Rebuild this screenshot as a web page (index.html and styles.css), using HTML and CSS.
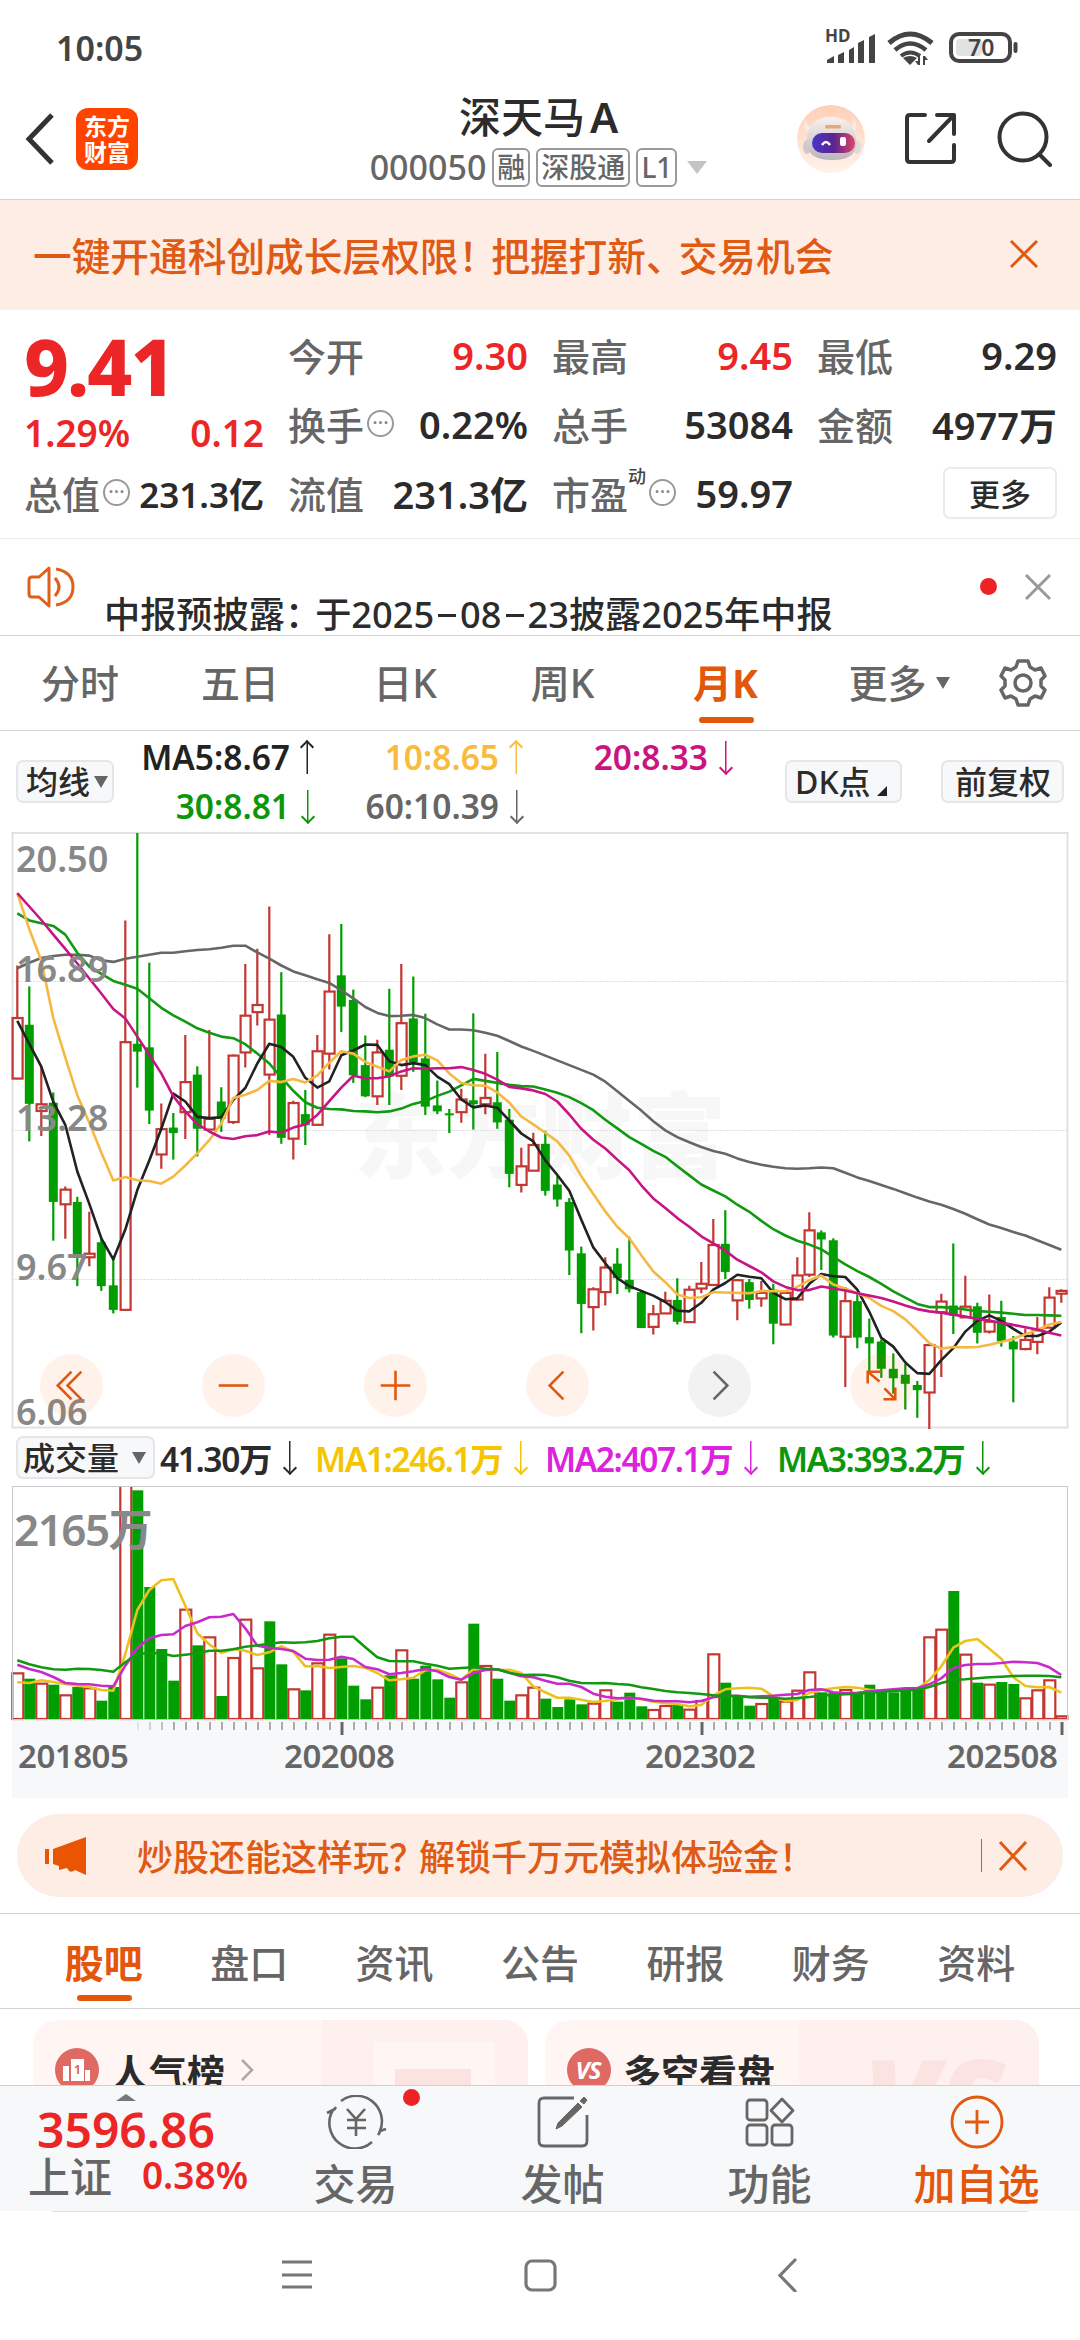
FILE: index.html
```html
<!DOCTYPE html>
<html lang="zh-CN">
<head>
  <meta charset="UTF-8" />
  <meta name="viewport" content="width=device-width, initial-scale=1.0" />
  <title>深天马A 000050</title>
  <link rel="stylesheet" href="styles.css">
</head>
<body>
  <!-- Status bar -->
  <div class="status-bar">
    <span class="clock">10:05</span>
    <svg class="status-icons" width="194" height="40" viewBox="0 0 194 40" fill="none" stroke="#444">
      <text x="0" y="14" class="hd">HD</text>
      <g fill="#444" stroke="none">
        <path d="M2 35v-3l7-4v7z M13 35v-8l6-3v11z M24 35v-13l5-3v16z M33 35v-20l6-3v23z M44 35v-26l6-3v29z" />
        <path d="M78 30q7-4 14 0l-7 7z" />
        <path d="M95 28v9h-2l-3-4h3v-5z M98 37v-9h2l3 4h-3v5z" />
      </g>
      <path d="M64 15q21-18 43 0" stroke-width="5" />
      <path d="M70 22q15-13 31 0" stroke-width="4.5" />
      <path d="M76 28q9-7 19 0" stroke-width="4" />
      <rect x="126" y="6" width="59" height="27" rx="8" stroke-width="4" />
      <rect x="131" y="11" width="26" height="17" rx="4" fill="#e2e2e2" stroke="none" />
      <path d="M190.500 16v7" stroke-width="4" stroke-linecap="round" />
      <text x="143" y="28" class="battery">70</text>
    </svg>
  </div>

  <!-- Header -->
  <div class="header">
    <div class="header-left">
      <svg width="32" height="54" viewBox="0 0 32 54" fill="none" stroke="#333" stroke-width="5"><path d="M28 3L5 27l23 24" /></svg>
      <div class="logo"><span>东方</span><span>财富</span></div>
    </div>
    <div class="header-title">
      <h1>深天马<span>A</span></h1>
      <div class="code-line">
        <span class="code">000050</span>
        <span class="tag">融</span>
        <span class="tag">深股通</span>
        <span class="tag">L1</span>
        <i class="tri tri-light"></i>
      </div>
    </div>
    <div class="header-right">
      <svg width="68" height="68" viewBox="0 0 68 68">
        <defs>
          <linearGradient id="peach" x1="0" y1="0" x2="0" y2="1"><stop offset="0" stop-color="#ffcfb6" /><stop offset="1" stop-color="#fff3ec" /></linearGradient>
          <linearGradient id="visor"><stop offset="0" stop-color="#4a35c8" /><stop offset=".5" stop-color="#5a2590" /><stop offset="1" stop-color="#e04468" /></linearGradient>
          <linearGradient id="shell" x1="0" y1="0" x2="0" y2="1"><stop offset="0" stop-color="#f7f2f1" /><stop offset="1" stop-color="#bcb4ba" /></linearGradient>
        </defs>
        <circle cx="34" cy="34" r="34" fill="url(#peach)" />
        <path d="M15 22Q7 20 9 13Q5 21 9 27zM52 22Q58 20 56 12Q62 21 57 27z" fill="#f6ebe6" />
        <ellipse cx="10" cy="42" rx="4" ry="7" fill="#cfc8cb" />
        <ellipse cx="60" cy="42" rx="4" ry="7" fill="#e2dada" />
        <path d="M10 34Q12 12 34 12T59 34Q62 55 35 55T10 34z" fill="url(#shell)" />
        <rect x="28" y="20" width="16" height="3.500" rx="1.500" fill="#e8a878" />
        <rect x="15" y="28" width="43" height="20" rx="10" fill="url(#visor)" />
        <path d="M25 40q4-6 8 0" fill="none" stroke="#fff" stroke-width="2.500" />
        <rect x="43" y="32" width="6" height="9" rx="2" fill="#fff" />
      </svg>
      <svg width="54" height="54" viewBox="0 0 54 54" fill="none" stroke="#333" stroke-width="4" stroke-linecap="round" stroke-linejoin="round">
        <path d="M21 3H6Q3 3 3 6V47Q3 50 6 50H47Q50 50 50 47V33M33 3H50V22M50 3L25 29" />
      </svg>
      <svg width="56" height="56" viewBox="0 0 56 56" fill="none" stroke="#333" stroke-width="4" stroke-linecap="round">
        <circle cx="26" cy="26" r="23.500" /><path d="M43 44L53 54" />
      </svg>
    </div>
  </div>

  <div class="banner">
    <span>一键开通科创成长层权限<span class="punct">！</span>把握打新<span class="punct">、</span>交易机会</span>
    <svg width="30" height="30" viewBox="0 0 30 30" fill="none" stroke="#e25a12" stroke-width="3"><path d="M2 2L28 28M28 2L2 28" /></svg>
  </div>

  <!-- Quote -->
  <div class="quote">
    <div class="col col-price">
      <div class="price">9.41</div>
      <div class="change"><span>1.29%</span><span>0.12</span></div>
      <div class="cell small"><label>总值</label><i class="dots">···</i><b>231.3亿</b></div>
    </div>
    <div class="col">
      <div class="cell"><label>今开</label><b class="red">9.30</b></div>
      <div class="cell"><label>换手</label><i class="dots">···</i><b>0.22%</b></div>
      <div class="cell"><label>流值</label><b>231.3亿</b></div>
    </div>
    <div class="col">
      <div class="cell"><label>最高</label><b class="red">9.45</b></div>
      <div class="cell"><label>总手</label><b>53084</b></div>
      <div class="cell"><label>市盈</label><sup>动</sup><i class="dots">···</i><b>59.97</b></div>
    </div>
    <div class="col">
      <div class="cell"><label>最低</label><b>9.29</b></div>
      <div class="cell"><label>金额</label><b>4977万</b></div>
      <div class="cell"><button class="more-btn">更多</button></div>
    </div>
  </div>

  <div class="notice">
    <svg width="48" height="42" viewBox="0 0 48 42" fill="none" stroke="#e0601a" stroke-width="3">
      <path d="M22 2L12 11H5Q2 11 2 14V28Q2 31 5 31H12L22 40z" stroke-linejoin="round" />
      <path d="M28 12q8 9 0 18M29 3q17 3 17 18T29 39" />
    </svg>
    <p>中报预披露<span class="colon">：</span>于2025<s></s>08<s></s>23披露2025年中报</p>
    <i class="red-dot"></i>
    <svg width="28" height="28" viewBox="0 0 28 28" fill="none" stroke="#999" stroke-width="3"><path d="M2 2L26 26M26 2L2 26" /></svg>
  </div>

  <!-- Period tabs -->
  <div class="period-tabs">
    <span>分时</span><span>五日</span><span>日K</span><span>周K</span><span class="active">月K</span>
    <span class="more">更多<i class="tri"></i></span>
    <svg width="48" height="50" viewBox="-24 -25 48 50" fill="none" stroke="#666" stroke-width="3.500" stroke-linejoin="round">
      <path d="M-5-22H5L7-16L12-13L18-15L22-7L18-3V3L22 7L18 15L12 13L7 16L5 22H-5L-7 16L-12 13L-18 15L-22 7L-18 3V-3L-22-7L-18-15L-12-13L-7-16z" />
      <circle r="8" />
    </svg>
  </div>

  <!-- Moving averages -->
  <div class="ma-bar">
    <button class="chip">均线<i class="tri"></i></button>
    <div class="ma-grid">
      <span class="ma5">MA5:8.67<em class="up"></em></span>
      <span class="ma10">10:8.65<em class="up"></em></span>
      <span class="ma20">20:8.33<em></em></span>
      <span class="ma30">30:8.81<em></em></span>
      <span class="ma60">60:10.39<em></em></span>
    </div>
    <button class="chip chip-dk">DK点<i class="corner"></i></button>
    <button class="chip">前复权</button>
  </div>

  <div class="chart-box">
    <svg id="kline" width="1080" height="597" viewBox="0 0 1080 597"></svg>
    <div class="controls">
      <span><svg viewBox="0 0 64 64"><path d="M32 18L18 32L32 46M42 18L28 32L42 46" /></svg></span>
      <span><svg viewBox="0 0 64 64"><path d="M17 32H47" /></svg></span>
      <span><svg viewBox="0 0 64 64"><path d="M17 32H47M32 17V47" /></svg></span>
      <span><svg viewBox="0 0 64 64"><path d="M38 18L24 32L38 46" /></svg></span>
      <span class="grey"><svg viewBox="0 0 64 64"><path d="M26 18L40 32L26 46" /></svg></span>
      <span><svg viewBox="0 0 64 64"><path d="M18 30V18H31M18 18L30 28M35 35L46 46M34 46H46V34" /></svg></span>
    </div>
  </div>

  <!-- Volume -->
  <div class="vol-bar">
    <button class="chip">成交量<i class="tri"></i></button>
    <span class="v0">41.30万<em></em></span>
    <span class="v1">MA1:246.1万<em></em></span>
    <span class="v2">MA2:407.1万<em></em></span>
    <span class="v3">MA3:393.2万<em></em></span>
  </div>
  <svg id="volume" width="1080" height="312" viewBox="0 0 1080 312"></svg>

  <div class="promo">
    <svg width="42" height="38" viewBox="0 0 42 38" fill="#ea5504"><path d="M0 12H4V27H0zM8 12L41 0V38L30 33Q27 36 24 34L22 31L14 33V29L8 27z" /></svg>
    <span class="promo-text">炒股还能这样玩<span class="punct">？</span>解锁千万元模拟体验金！</span>
    <i class="divider"></i>
    <svg width="30" height="32" viewBox="0 0 30 32" fill="none" stroke="#e25a12" stroke-width="3"><path d="M2 2L28 30M28 2L2 30" /></svg>
  </div>

  <!-- Content tabs -->
  <div class="content-tabs">
    <span class="active">股吧</span><span>盘口</span><span>资讯</span><span>公告</span><span>研报</span><span>财务</span><span>资料</span>
  </div>

  <div class="cards">
    <div class="card">
      <svg class="card-bg" width="495" height="65" viewBox="0 0 495 65"><path d="M289 0H495V65H289z" fill="#fef0ef" /><path d="M340 22H462V65H340z" fill="#fff5f3" /><path d="M362 49H438V65H362z" fill="#fae3e1" /></svg>
      <svg width="44" height="44" viewBox="0 0 44 44"><circle cx="22" cy="22" r="22" fill="#df6a64" /><path d="M8 33V18H14V33zM16 33V11H29V33zM30 33V22H35V33z" fill="#fff" /><text x="19" y="26" class="rank">1</text></svg>
      <h2>人气榜</h2>
      <svg width="16" height="24" viewBox="0 0 16 24" fill="none" stroke="#aaa" stroke-width="2.500"><path d="M3 2L13 12L3 22" /></svg>
    </div>
    <div class="card">
      <svg class="card-bg" width="495" height="65" viewBox="0 0 495 65"><path d="M254 0H495V65H254z" fill="#fef0ef" /><text x="318" y="128" class="vs-ghost">VS</text></svg>
      <svg width="44" height="44" viewBox="0 0 44 44"><circle cx="22" cy="22" r="22" fill="#df6a64" /><text x="21" y="31" class="vs">VS</text></svg>
      <h2>多空看盘</h2>
    </div>
  </div>

  <!-- Bottom bar -->
  <div class="bottom-bar">
    <div class="index-box">
      <i class="tri-up"></i>
      <div class="index-value">3596.86</div>
      <div class="index-line"><span>上证</span><b>0.38%</b></div>
    </div>
    <div class="action">
      <svg width="62" height="54" viewBox="-31 -27 62 54" fill="none" stroke="#666" stroke-width="2.600">
        <path d="M-15-21A25.500 25.500 0 0 1 24 9L30 7M24 10L22 13M16 20A25.500 25.500 0 0 1-23-12L-29-9M-22-12L-20-15" />
        <path d="M-9-13L0-3L9-13M0-3V14M-9-2H10M-9 6H10" />
      </svg>
      <i class="red-dot"></i>
      <span>交易</span>
    </div>
    <div class="action">
      <svg width="54" height="54" viewBox="0 0 54 54" fill="none" stroke="#666" stroke-width="2.800">
        <path d="M38 3H8Q3 3 3 8V46Q3 51 8 51H46Q51 51 51 46V20" />
        <path d="M20 34L22 28L42 8L46 12L26 31zM44 6L48 2L51 5L48 9z" fill="#666" stroke-width="1" />
      </svg>
      <span>发帖</span>
    </div>
    <div class="action">
      <svg width="54" height="54" viewBox="0 0 54 54" fill="none" stroke="#666" stroke-width="2.800">
        <rect x="4" y="5" width="20" height="20" rx="3" /><rect x="4" y="30" width="20" height="20" rx="3" /><rect x="29" y="30" width="20" height="20" rx="3" />
        <path d="M39 4L50 15.500L39 27L28 15.500z" stroke-linejoin="round" />
      </svg>
      <span>功能</span>
    </div>
    <div class="action orange">
      <svg width="54" height="54" viewBox="0 0 54 54" fill="none" stroke="#e25a12" stroke-width="2.800"><circle cx="27" cy="27" r="25" /><path d="M15 27H39M27 15V39" /></svg>
      <span>加自选</span>
    </div>
  </div>

  <div class="nav-bar">
    <svg width="520" height="34" viewBox="0 0 520 34" fill="none" stroke="#777" stroke-width="3.200">
      <path d="M4 4H34M4 17H34M4 29H34" />
      <rect x="248" y="3" width="29" height="29" rx="6" />
      <path d="M517 2L502 17.500L517 33" stroke-linecap="round" />
    </svg>
  </div>

  <script>
    const RED = "#c43632";
    const GREEN = "#009e00";
    const STEP = 12;
    const X0 = 17.3;
    const DATES = ["201805", "202008", "202302", "202508"];

    // type, high, body top, body bottom, low (1505 units over the chart height)
    const candles = `r 367 500 653 655|g 420 517 717 812|r 622 718 735 798|g 688 714 965 1063|r 926 934 971 1058|g 952 965 1098 1178|r 990 1096 1105 1128|g 1055 1067 1178 1190
|g 1105 1176 1238 1247|r 253 561 1238 1241|g 32 565 585 676|g 360 574 734 768|r 716 781 845 881|g 740 777 791 858|r 543 662 738 806|g 622 643 780 850
|r 530 755 782 784|g 675 711 755 788|r 592 595 763 768|r 363 494 587 625|r 325 467 485 519|r 218 504 643 796|g 384 491 803 818|r 709 715 805 858
|g 682 743 771 821|r 543 584 770 772|r 288 433 590 630|g 262 392 471 535|g 428 454 645 664|g 544 619 698 700|r 555 587 698 720|g 426 580 648 720
|r 363 513 646 682|g 395 501 612 636|g 489 602 724 745|g 658 721 736 743|g 730 741 746 791|r 679 706 738 765|g 488 708 718 782|r 590 702 718 743
|g 586 713 764 780|g 730 757 894 928|r 828 875 922 941|r 790 821 886 887|g 785 818 937 949|g 900 921 959 977|g 955 965 1088 1150|g 1078 1095 1223 1297
|r 1181 1186 1231 1290|r 1105 1131 1193 1227|g 1082 1121 1158 1198|g 1053 1162 1186 1194|g 1190 1193 1284 1284|r 1226 1249 1281 1300|r 1192 1215 1247 1248|g 1158 1213 1268 1275
|r 1177 1187 1269 1270|r 1117 1172 1184 1196|r 1008 1074 1175 1176|g 986 1071 1142 1160|r 1160 1163 1214 1264|g 1160 1168 1213 1235|r 1165 1195 1209 1230|g 1172 1187 1273 1325
|r 1192 1195 1275 1277|r 1105 1151 1212 1215|r 991 1037 1149 1155|g 1037 1042 1060 1137|g 1057 1062 1303 1308|r 1180 1216 1306 1433|g 1195 1216 1308 1335|g 1260 1307 1323 1400
|g 1313 1318 1387 1410|g 1348 1387 1411 1450|g 1375 1402 1425 1490|g 1418 1428 1441 1511|r 1325 1327 1447 1540|r 1197 1217 1244 1408|g 1070 1227 1253 1299|r 1152 1230 1257 1258
|g 1220 1229 1296 1323|r 1199 1268 1293 1298|g 1215 1256 1318 1331|g 1304 1318 1338 1472|r 1285 1314 1337 1340|r 1256 1290 1319 1350|r 1181 1207 1283 1284|r 1186 1190 1197 1220`
      .split("|").map(s => s.trim().split(" ")).map(([t, ...v]) => [t, ...v.map(Number)]);

    const ma = {
      "#666666": [374,360,348,343,340,340,342,354,358,350,345,340,335,335,331,328,326,322,317,317,334,350,367,382,392,402,411,430,450,472,487,495,494,492,500,516,529,529,531,537,545,558,572,583,595,607,619,631,643,661,685,710,734,761,784,801,814,826,836,843,855,864,871,876,880,881,880,878,880,891,903,912,922,932,943,954,964,972,983,995,1009,1022,1031,1041,1050,1062,1074,1086],
      "#119911": [235,253,260,267,289,335,370,388,406,416,426,450,474,493,509,526,537,547,551,566,590,615,650,684,713,727,730,731,735,736,738,736,729,717,710,697,686,670,654,659,664,669,672,673,681,689,700,715,733,757,779,801,818,836,851,875,898,921,936,951,972,990,1013,1034,1050,1063,1073,1085,1104,1123,1140,1155,1172,1191,1207,1223,1231,1231,1233,1237,1241,1243,1245,1248,1251,1251,1252,1253],
      "#222222": [507,565,623,712,770,888,970,1057,1110,1035,935,860,780,691,711,750,753,751,707,677,615,565,573,598,651,676,660,594,582,567,568,609,619,614,619,648,667,706,726,721,727,759,792,812,860,897,937,1010,1080,1120,1158,1178,1190,1202,1218,1240,1242,1220,1187,1170,1149,1154,1158,1195,1211,1209,1172,1147,1153,1155,1187,1243,1309,1331,1371,1398,1400,1365,1335,1293,1266,1252,1266,1286,1304,1304,1293,1270],
      "#f5b942": [184,275,355,500,600,695,765,840,911,902,910,912,919,901,873,842,809,767,702,694,682,659,662,654,663,645,613,584,590,611,623,635,606,597,593,607,640,664,670,671,688,714,749,769,790,812,848,900,945,989,1028,1057,1100,1141,1168,1199,1208,1206,1193,1194,1195,1196,1190,1191,1191,1180,1163,1151,1174,1184,1196,1208,1228,1241,1262,1291,1322,1336,1332,1333,1332,1326,1319,1311,1300,1289,1275,1269],
      "#c71585": [184,218,252,289,325,362,400,438,477,501,547,593,640,698,736,768,787,802,806,799,796,787,790,777,769,745,710,676,646,652,652,647,635,627,628,627,627,624,631,641,656,674,678,683,692,711,744,780,808,830,858,885,923,956,980,1006,1028,1052,1070,1088,1111,1127,1143,1166,1180,1188,1188,1179,1184,1189,1196,1202,1208,1217,1227,1236,1242,1245,1250,1255,1261,1265,1271,1276,1282,1288,1296,1303]
    };

    // bar tops, 895 is the floor
    const volume = [755,774,786,792,821,799,800,840,799,150,209,499,685,780,564,674,647,826,709,594,740,602,731,803,809,725,639,713,795,836,798,764,686,774,735,776,831,782,609,733,774,840,821,798,834,859,836,851,846,806,843,816,857,865,853,852,864,838,698,786,827,855,847,834,840,807,752,815,815,805,820,792,815,815,810,808,647,624,511,699,786,789,784,790,830,806,776,884];
    const greenVolume = [12, 21, 60];
    const volumeMa = {
      "#ecc11e": [785,787,779,784,790,795,799,808,810,700,568,508,479,475,555,638,671,697,685,690,703,695,677,693,737,736,742,739,736,741,757,779,776,771,749,747,760,778,746,748,748,747,757,797,815,831,831,837,844,841,836,831,836,843,848,850,857,853,824,806,803,801,804,826,842,838,817,808,803,799,801,807,810,808,806,804,778,737,681,661,655,684,714,770,796,800,799,816],
      "#c82bcb": [732,745,754,769,787,790,791,795,797,735,682,653,643,641,616,605,590,588,580,623,675,681,685,691,714,718,717,708,715,739,746,761,757,752,745,752,769,777,757,748,746,756,767,770,780,789,789,799,819,828,833,831,834,840,842,842,845,841,830,826,825,828,827,825,822,820,808,806,815,818,816,812,809,806,803,803,791,773,742,733,730,730,727,723,725,727,740,763],
      "#119911": [719,731,740,746,747,744,745,748,753,725,700,697,698,706,702,698,690,690,686,678,674,670,665,666,665,661,653,648,648,680,710,721,722,722,729,735,744,742,740,744,746,756,763,762,763,770,780,787,788,787,790,792,800,805,811,815,817,820,824,826,826,830,831,832,834,832,829,825,822,821,819,816,814,811,809,807,799,787,778,776,773,770,768,766,765,765,766,770]
    };

    const x = i => X0 + STEP * i;
    const priceY = v => (v - 32) / 2.529 + 1;
    const volY = v => (v - 199) / 3 + 1;

    function line(values, y, color) {
      const points = values.map((v, i) => `${x(i)},${y(v).toFixed(1)}`).join(" ");
      return `<polyline points="${points}" fill="none" stroke="${color}" stroke-width="2.600" stroke-linejoin="round"/>`;
    }

    function drawKline() {
      let out = `<text class="watermark" x="354" y="339">东方财富</text>`;
      [149.500, 298.500, 447.500].forEach(y => {
        out += `<path d="M12 ${y}H1068" stroke="#dedede" stroke-width="1" stroke-dasharray="2 1"/>`;
      });
      out += `<rect x="12.500" y="1" width="1055" height="594.500" fill="none" stroke="#e2e2e2" stroke-width="2"/>`;
      candles.forEach(([type, high, top, bottom, low], i) => {
        const c = x(i), t = priceY(top), b = priceY(bottom);
        if (type === "g") {
          out += `<path d="M${c} ${priceY(high)}V${priceY(low)}" stroke="${GREEN}" stroke-width="2.200"/>`;
          out += `<rect x="${c - 4.5}" y="${t}" width="9" height="${b - t}" fill="${GREEN}"/>`;
        } else {
          out += `<path d="M${c} ${priceY(high)}V${t}M${c} ${b}V${priceY(low)}" stroke="${RED}" stroke-width="2.200"/>`;
          out += `<rect x="${c - 4.7}" y="${t}" width="10" height="${b - t}" fill="none" stroke="${RED}" stroke-width="2.200"/>`;
        }
      });
      for (const color in ma) out += line(ma[color], priceY, color);
      [["20.50", 39.5], ["16.89", 149.5], ["13.28", 298.5], ["9.67", 447.5], ["6.06", 592.5]].forEach(([t, y]) => {
        out += `<text class="scale" x="16" y="${y}">${t}</text>`;
      });
      document.getElementById("kline").innerHTML = out;
    }

    function drawVolume() {
      const floor = volY(895);
      let out = `<rect x="12" y="234" width="1056" height="78" fill="#f7f8fa"/>`;
      volume.forEach((v, i) => {
        const c = x(i), t = Math.max(volY(v), -4);
        if (candles[i][0] === "g" || greenVolume.includes(i)) {
          out += `<rect x="${c - 5}" y="${t}" width="11" height="${floor - t}" fill="${GREEN}"/>`;
        } else {
          out += `<rect x="${c - 5}" y="${t + 1}" width="11" height="${floor - t - 1}" fill="#fff" stroke="${RED}" stroke-width="2.200"/>`;
        }
      });
      out += `<rect x="12.500" y=".5" width="1055" height="233" fill="none" stroke="#c8c8c8"/>`;
      for (const color in volumeMa) out += line(volumeMa[color], volY, color);
      out += `<text class="scale scale-vol" x="14" y="60">2165万</text>`;
      for (let i = 10; i < 88; i++) {
        const major = i === 27 || i === 57 || i === 87;
        out += `<path d="M${x(i) + 0.7} 236V${major ? 249 : 244}" stroke="${major ? "#666" : "#999"}" stroke-width="${major ? 3 : 1.6}" opacity="${Math.min(1, (i - 9) / 4)}"/>`;
      }
      [18, 284, 645, 947].forEach((left, i) => {
        out += `<text class="date" x="${left}" y="282">${DATES[i]}</text>`;
      });
      document.getElementById("volume").innerHTML = out;
    }

    drawKline();
    drawVolume();
  </script>
</body>
</html>
```
FILE: styles.css
```css
* {
  box-sizing: border-box;
}

body {
  margin: 0;
  width: 1080px;
  height: 2340px;
  overflow: hidden;
  background: #fff;
  color: #2b2b2b;
  font-family: "Noto Sans", "Noto Sans CJK SC", sans-serif;
  font-weight: 500;
  display: flex;
  flex-direction: column;
}

body > * {
  flex-shrink: 0;
}

svg {
  display: block;
  flex-shrink: 0;
}

h1, h2, p {
  margin: 0;
}

i, em {
  font-style: normal;
}

button {
  font: inherit;
  color: inherit;
  margin: 0;
}

/* status bar */
.status-bar {
  height: 93px;
  padding: 2px 61px 0 56px;
  display: flex;
  align-items: center;
  justify-content: space-between;
}

.clock {
  font-size: 34px;
  font-weight: 600;
  color: #444;
}

.hd {
  font-size: 17px;
  font-weight: 700;
  fill: #444;
  stroke: none;
}

.battery {
  font-size: 23px;
  font-weight: 600;
  fill: #444;
  stroke: none;
}

/* header */
.header {
  height: 107px;
  border-bottom: 1px solid #d2d2d2;
  padding: 0 27px 0 24px;
  display: grid;
  grid-template-columns: 257px 1fr 257px;
}

.header-left {
  display: flex;
  align-items: center;
  gap: 20px;
  height: 92px;
}

.logo {
  width: 62px;
  height: 62px;
  border-radius: 12px;
  background: #ff4400;
  color: #fff;
  font-size: 23px;
  font-weight: 700;
  line-height: 26px;
  display: flex;
  flex-direction: column;
  align-items: center;
  justify-content: center;
}

.header-title {
  display: flex;
  flex-direction: column;
  align-items: center;
}

.header-title h1 {
  font-size: 42px;
  font-weight: 500;
  line-height: 48px;
}

.header-title h1 span {
  margin-left: 5px;
  font-weight: 600;
}

.code-line {
  display: flex;
  align-items: center;
  gap: 6px;
  height: 52px;
  color: #666;
}

.code {
  font-size: 34px;
}

.tag {
  height: 39px;
  padding: 0 3px;
  border: 2px solid #9a9a9a;
  border-radius: 6px;
  font-size: 28px;
  line-height: 34px;
}

.header-right {
  height: 92px;
  display: flex;
  align-items: center;
  justify-content: flex-end;
  gap: 39px;
}

.tri {
  width: 0;
  height: 0;
  border-left: 7px solid transparent;
  border-right: 7px solid transparent;
  border-top: 12px solid #666;
}

.tri-light {
  border-width: 13px 10px 0;
  border-top-color: #c4c4c4;
  margin-left: 4px;
}

/* banner */
.banner {
  height: 110px;
  padding: 0 41px 2px 33px;
  background: #fdede4;
  color: #df5a14;
  font-size: 38.700px;
  display: flex;
  align-items: center;
  justify-content: space-between;
}

.punct {
  margin-right: -6px;
}

/* quote */
.quote {
  height: 229px;
  padding: 10px 22px 0 24px;
  border-bottom: 1px solid #ececec;
  display: grid;
  grid-template-columns: 240px 240px 241px 240px;
  column-gap: 24px;
}

.cell {
  height: 69px;
  display: flex;
  align-items: center;
  font-size: 38px;
}

.cell label {
  color: #666;
  font-size: 38px;
}

.cell b {
  margin-left: auto;
  font-weight: 600;
}

.cell.small b {
  font-size: 35px;
}

.cell sup {
  font-size: 18px;
  color: #444;
  align-self: flex-start;
  line-height: 18px;
  margin-top: 9px;
}

.dots {
  width: 27px;
  height: 27px;
  margin-left: 3px;
  border: 2px solid #999;
  border-radius: 50%;
  color: #888;
  font-size: 20px;
  line-height: 22px;
  text-align: center;
}

.red, .price, .change {
  color: #ec2626;
}

.price {
  height: 83px;
  font-size: 78px;
  font-weight: 800;
  line-height: 92px;
  letter-spacing: -2px;
}

.change {
  height: 55px;
  padding-top: 4px;
  display: flex;
  justify-content: space-between;
  align-items: center;
  font-size: 37px;
  font-weight: 600;
}

.more-btn {
  width: 114px;
  height: 52px;
  margin-left: auto;
  padding: 0;
  background: #fff;
  border: 2px solid #e8eaec;
  border-radius: 7px;
  font-size: 31px;
}

/* notice */
.notice {
  height: 97px;
  padding: 27px 28px 0 27px;
  border-bottom: 1px solid #d2d2d2;
  overflow: hidden;
  display: flex;
  align-items: flex-start;
}

.notice p {
  margin: 24px 0 0 29px;
  font-size: 36.200px;
  line-height: 48px;
  white-space: nowrap;
}

.notice .colon {
  margin-right: -6px;
}

.notice s {
  display: inline-block;
  width: 18px;
  height: 3px;
  margin: 0 4px;
  background: #2b2b2b;
  vertical-align: 11px;
}

.red-dot {
  width: 17px;
  height: 17px;
  border-radius: 50%;
  background: #ee2222;
}

.notice .red-dot {
  margin: 12px 27px 0 auto;
}

.notice > svg:last-child {
  margin-top: 7px;
}

/* period tabs */
.period-tabs {
  height: 95px;
  padding: 0 33px 0 0;
  border-bottom: 1px solid #d2d2d2;
  display: grid;
  grid-template-columns: 160px 160px 170px 145px 181px 166px 1fr;
  align-items: center;
  justify-items: center;
  font-size: 39px;
  color: #666;
}

.period-tabs span,
.content-tabs span {
  height: 94px;
  line-height: 94px;
  position: relative;
}

.period-tabs svg {
  justify-self: end;
}

.period-tabs .more {
  display: flex;
  align-items: center;
  gap: 9px;
}

.active {
  color: #e2570c;
  font-weight: 700;
}

.active::after {
  content: "";
  position: absolute;
  left: 50%;
  bottom: 7px;
  width: 55px;
  height: 6px;
  margin-left: -27px;
  border-radius: 3px;
  background: #e2570c;
}

/* moving averages */
.ma-bar {
  height: 101px;
  padding: 0 16px;
  display: flex;
  align-items: center;
}

.chip {
  height: 43px;
  padding: 0 6px 0 8px;
  background: #f7f8fa;
  border: 2px solid #e4e6e9;
  border-radius: 7px;
  font-size: 32px;
  line-height: 38px;
  display: flex;
  align-items: center;
  gap: 4px;
}

.ma-bar .chip:first-child {
  padding: 0 4px 0 8px;
}

.ma-bar .chip:last-child {
  margin-left: 39px;
  padding: 0 11px 0 12px;
}

.chip-dk {
  width: 117px;
  margin-left: auto;
  gap: 6px;
}

.corner {
  width: 0;
  height: 0;
  border-left: 10px solid transparent;
  border-bottom: 10px solid #222;
  margin-top: 18px;
}

.ma-grid {
  width: 620px;
  display: grid;
  grid-template-columns: 200px 209px 209px;
  grid-auto-rows: 49px;
  align-items: center;
  font-size: 33.500px;
  font-weight: 600;
}

.ma-grid span {
  display: flex;
  align-items: center;
  justify-content: flex-end;
  gap: 11px;
}

/* thin arrow: shaft plus open head */
em {
  position: relative;
  width: 13px;
  height: 33px;
  background: linear-gradient(currentColor, currentColor) center / 1.500px 100% no-repeat;
}

em::after {
  content: "";
  position: absolute;
  left: 2px;
  bottom: 1px;
  width: 8px;
  height: 8px;
  border: solid currentColor;
  border-width: 0 2px 2px 0;
  transform: rotate(45deg);
}

em.up {
  transform: rotate(180deg);
}

.ma5 { color: #222; }
.ma10 { color: #f8bb3c; }
.ma20 { color: #cc1480; }
.ma30 { color: #0b960b; }
.ma60 { color: #666; }

/* charts */
.chart-box {
  position: relative;
  height: 597px;
}

.watermark {
  font-size: 93px;
  font-weight: 900;
  fill: #f7f7f7;
}

.scale {
  font-size: 36px;
  font-weight: 600;
  fill: #888;
}

.scale-vol {
  font-size: 44px;
  letter-spacing: -1.500px;
}

.date {
  font-size: 33px;
  font-weight: 600;
  letter-spacing: -0.500px;
  fill: #666;
}

.controls {
  position: absolute;
  left: 40px;
  top: 522px;
  display: flex;
  gap: 99px;
}

.controls span {
  width: 63px;
  height: 63px;
  border-radius: 50%;
  background: rgba(240, 85, 0, 0.08);
}

.controls .grey {
  background: rgba(0, 0, 0, 0.05);
}

.controls path {
  fill: none;
  stroke: #e2570c;
  stroke-width: 2.600;
}

.controls .grey path {
  stroke: #666;
}

/* volume */
.vol-bar {
  height: 57px;
  padding: 0 16px;
  display: flex;
  align-items: center;
  font-size: 33.500px;
}

.vol-bar span {
  display: flex;
  align-items: center;
  gap: 12px;
  font-weight: 600;
  letter-spacing: -1.400px;
}

.vol-bar .chip {
  width: 139px;
  gap: 13px;
  padding: 0 6px 0 5px;
}

.v0 { width: 155px; margin-left: 5px; }
.v1 { width: 230px; color: #f5c500; }
.v2 { width: 232px; color: #dd22dd; }
.v3 { color: #0b960b; }

/* promo */
.promo {
  height: 83px;
  margin: 16px 17px 0;
  padding: 0 35px 0 28px;
  border-radius: 42px;
  background: #fdede4;
  color: #df5a14;
  font-size: 36px;
  display: flex;
  align-items: center;
}

.promo-text {
  margin-left: 50px;
  flex: 1;
}

.divider {
  width: 1px;
  height: 33px;
  margin-right: 16px;
  background: #e2570c;
}

/* content tabs */
.content-tabs {
  height: 96px;
  margin-top: 16px;
  padding: 0 31px;
  border-top: 1px solid #d2d2d2;
  border-bottom: 1px solid #d2d2d2;
  display: grid;
  grid-template-columns: repeat(7, 1fr);
  justify-items: center;
  font-size: 39px;
  color: #666;
}

.content-tabs span {
  line-height: 97px;
}

/* cards */
.cards {
  height: 76px;
  padding: 11px 41px 0 33px;
  overflow: hidden;
  display: grid;
  grid-template-columns: 495px 494px;
  column-gap: 17px;
}

.card {
  position: relative;
  height: 100px;
  padding: 0 22px;
  border-radius: 24px;
  background: #fff6f4;
  overflow: hidden;
  display: flex;
  align-items: center;
}

.card > svg, .card h2 {
  position: relative;
}

.card > .card-bg {
  position: absolute;
  left: 0;
  top: 0;
}

.card h2 {
  margin: 1px 14px 0 12px;
  font-size: 38px;
  font-weight: 700;
}

.rank {
  font-size: 12px;
  font-weight: 700;
  fill: #df6a64;
}

.vs {
  font-size: 24px;
  font-weight: 700;
  font-style: italic;
  letter-spacing: -1px;
  fill: #fff;
  text-anchor: middle;
}

.vs-ghost {
  font-size: 122px;
  font-weight: 900;
  font-style: italic;
  fill: #fae3e1;
}

/* bottom bar */
.bottom-bar {
  height: 126px;
  background: #f7f8fa;
  border-top: 1px solid #cfcfd2;
  display: grid;
  grid-template-columns: 252px repeat(4, 207px);
}

.index-box {
  display: flex;
  flex-direction: column;
  align-items: center;
  padding-top: 8px;
}

.tri-up {
  width: 0;
  height: 0;
  border-left: 10px solid transparent;
  border-right: 10px solid transparent;
  border-bottom: 7px solid #777;
}

.index-value {
  font-size: 48px;
  font-weight: 600;
  line-height: 58px;
  color: #ec2626;
}

.index-line {
  display: flex;
  align-items: center;
  gap: 30px;
  margin-top: -7px;
  padding-left: 24px;
  font-size: 42px;
  line-height: 50px;
  color: #666;
}

.index-line b {
  font-size: 37px;
  font-weight: 600;
  margin-top: -4px;
  color: #ec2626;
}

.action {
  position: relative;
  padding-top: 9px;
  display: flex;
  flex-direction: column;
  align-items: center;
  font-size: 42px;
  line-height: 60px;
  color: #666;
}

.action span {
  margin-top: 5px;
}

.action .red-dot {
  position: absolute;
  left: 151px;
  top: 3px;
}

.orange {
  color: #e2570c;
}

/* system navigation */
.nav-bar {
  height: 129px;
  margin: 0 52px;
  border-top: 1px solid #e0e0e0;
  padding: 46px 0 0 226px;
}
```
